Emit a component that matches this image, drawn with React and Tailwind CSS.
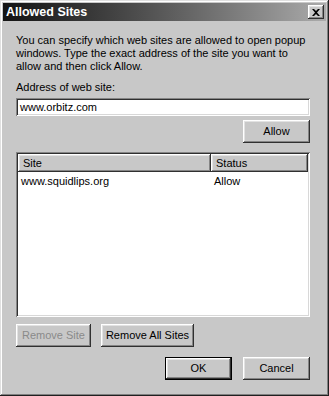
import React from 'react';

const font = { fontFamily: '"Liberation Sans", Arial, sans-serif' };

const raised =
  'shadow-[inset_-1px_-1px_0_#303030,inset_1px_1px_0_#ffffff,inset_-2px_-2px_0_#858585,inset_2px_2px_0_#e2e2e2]';
const sunken =
  'shadow-[inset_1px_1px_0_#858585,inset_-1px_-1px_0_#ffffff,inset_2px_2px_0_#303030,inset_-2px_-2px_0_#d8d8d8]';

const Button = ({ children, className = '', disabled }) => (
  <button
    className={`h-[23px] bg-[#c8c8c8] text-[11px] ${raised} ${disabled ? 'text-[#8a8a8a]' : 'text-black'} ${className}`}
    style={font}
  >
    {children}
  </button>
);

const App = () => {
  return (
    <div
      className="w-[329px] h-[396px] bg-[#c8c8c8] flex flex-col p-[3px] shadow-[inset_-1px_-1px_0_#202020,inset_1px_1px_0_#e0e0e0,inset_-2px_-2px_0_#808080,inset_2px_2px_0_#ffffff]"
      style={font}
    >
      {/* Title bar */}
      <div className="h-[18px] flex items-center justify-between pl-[3px] pr-[2px] bg-gradient-to-r from-[#141414] via-[#5a5a5a] to-[#ababab]">
        <span className="text-white font-bold text-[12.5px]">Allowed Sites</span>
        <div className={`w-[16px] h-[14px] bg-[#c8c8c8] flex items-center justify-center ${raised}`}>
          <svg width="8" height="7" viewBox="0 0 8 7">
            <path d="M0 0h2l2 2 2-2h2L5 3.5 8 7H6L4 5 2 7H0l3-3.5z" fill="#000" />
          </svg>
        </div>
      </div>

      {/* Body */}
      <div className="flex flex-col pl-[13px] pr-[16px] pt-[13px] text-[11px] text-black leading-[13px]">
        <p className="whitespace-nowrap">
          You can specify which web sites are allowed to open popup
          <br />
          windows. Type the exact address of the site you want to
          <br />
          allow and then click Allow.
        </p>

        <label className="mt-[8px]">Address of web site:</label>
        <div className={`mt-[4px] h-[18px] bg-white flex items-center px-[4px] ${sunken}`}>
          www.orbitz.com
        </div>

        <div className="flex justify-end mt-[4px]">
          <Button className="w-[67px]">Allow</Button>
        </div>

        {/* List */}
        <div className={`mt-[9px] h-[165px] bg-white p-[2px] ${sunken}`}>
          <div className="flex h-[18px]">
            <div className={`w-[193px] bg-[#c8c8c8] flex items-center px-[5px] ${raised}`}>Site</div>
            <div className={`flex-1 bg-[#c8c8c8] flex items-center px-[5px] ${raised}`}>Status</div>
          </div>
          <div className="flex mt-[3px] h-[13px]">
            <div className="w-[193px] px-[3px]">www.squidlips.org</div>
            <div className="px-[3px]">Allow</div>
          </div>
        </div>

        <div className="flex gap-[10px] mt-[7px]">
          <Button className="w-[75px]" disabled>Remove Site</Button>
          <Button className="w-[93px]">Remove All Sites</Button>
        </div>

        <div className="flex justify-end gap-[11px] mt-[10px]">
          <div className="w-[67px] h-[23px] border border-black">
            <Button className="w-full !h-full">OK</Button>
          </div>
          <Button className="w-[67px]">Cancel</Button>
        </div>
      </div>
    </div>
  );
};

export default App;
